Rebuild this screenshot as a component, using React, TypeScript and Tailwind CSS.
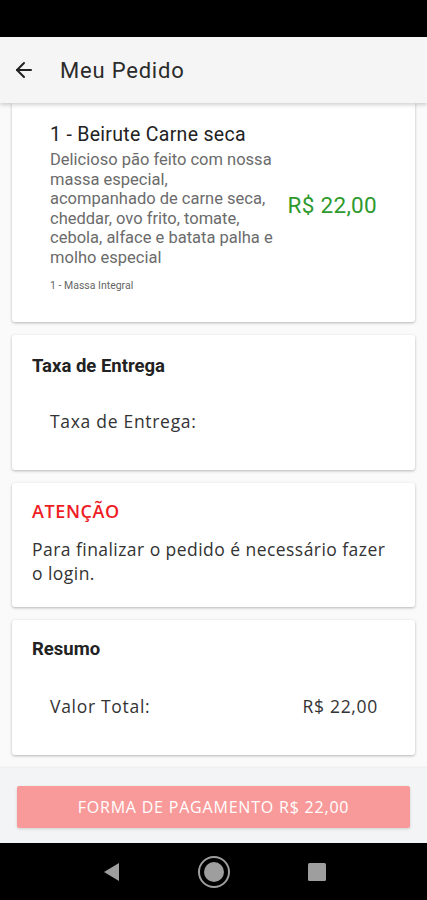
import { ArrowLeft } from 'lucide-react'

const card = 'bg-white rounded-[3px] shadow-[0_1px_3px_rgba(0,0,0,0.28)]'

export default function App() {
  return (
    <div className="w-[427px] h-[900px] flex flex-col bg-[#fafafa] overflow-hidden font-['Roboto',sans-serif]">
      {/* status bar */}
      <div className="h-[37px] bg-black shrink-0" />

      {/* app bar */}
      <header className="relative z-10 h-[66px] shrink-0 flex items-center bg-[#f5f5f5] shadow-[0_2px_4px_rgba(0,0,0,0.18)]">
        <ArrowLeft size={24} strokeWidth={2} className="ml-[12px] text-[#222]" />
        <h1 className="ml-[24px] text-[22px] text-[#2b2b2b] tracking-[0.8px]">Meu Pedido</h1>
      </header>

      {/* content */}
      <main className="flex-1 flex flex-col gap-[13px] px-[12px] overflow-hidden">
        <section className={`${card} rounded-t-none pt-[21px] pb-[29px] pl-[38px] pr-[38px] flex items-center justify-between`}>
          <div className="w-[226px]">
            <div className="text-[19.5px] leading-[22px] text-[#222] tracking-[0.3px]">1 - Beirute Carne seca</div>
            <p className="mt-[4px] text-[16.5px] leading-[19.6px] text-[#6b6b6b]">
              Delicioso pão feito com nossa massa especial, acompanhado de carne seca, cheddar, ovo frito, tomate, cebola, alface e batata palha e molho especial
            </p>
            <div className="mt-[10px] text-[10.5px] text-[#666]">1 - Massa Integral</div>
          </div>
          <div className="text-[22.5px] text-[#2e9a2e] mt-[-6px] tracking-[0.3px]">R$ 22,00</div>
        </section>

        <section className={`${card} h-[135px] pt-[19px] pl-[20px]`}>
          <h2 className="text-[18.5px] font-bold text-[#222] leading-[24px]">Taxa de Entrega</h2>
          <div className="mt-[30px] pl-[18px] text-[17.5px] text-[#333] font-['Open_Sans',sans-serif] tracking-[0.7px]">
            Taxa de Entrega:
          </div>
        </section>

        <section className={`${card} h-[124px] pt-[16px] pl-[20px] pr-[16px]`}>
          <h2 className="text-[18px] text-[#ee1c25] font-['Open_Sans',sans-serif] font-semibold leading-[24px] tracking-[0.6px]">ATENÇÃO</h2>
          <p className="mt-[14px] text-[17.5px] leading-[24px] text-[#333] font-['Open_Sans',sans-serif] tracking-[0.45px]">
            Para finalizar o pedido é necessário fazer o login.
          </p>
        </section>

        <section className={`${card} h-[135px] pt-[17px] pl-[20px] pr-[37px]`}>
          <h2 className="text-[18.5px] font-bold text-[#222] leading-[24px]">Resumo</h2>
          <div className="mt-[32px] pl-[18px] flex justify-between text-[17.5px] text-[#333] font-['Open_Sans',sans-serif] tracking-[0.7px]">
            <span>Valor Total:</span>
            <span>R$ 22,00</span>
          </div>
        </section>
      </main>

      {/* bottom action */}
      <footer className="h-[75px] shrink-0 bg-[#f3f4f5] shadow-[0_-1px_2px_rgba(0,0,0,0.06)] px-[17px] pt-[18px]">
        <button className="w-full h-[42px] rounded-[2px] bg-[#f99a9a] text-white text-[16px] uppercase font-['Open_Sans',sans-serif] tracking-[0.8px] shadow-[0_1px_3px_rgba(0,0,0,0.15)]">
          Forma de pagamento R$ 22,00
        </button>
      </footer>

      {/* navigation bar */}
      <nav className="h-[57px] shrink-0 bg-black flex items-center justify-center gap-[76px]">
        <svg width="20" height="22" viewBox="0 0 20 22">
          <path d="M18 2 L3 11 L18 20 Z" fill="#9e9e9e" />
        </svg>
        <svg width="34" height="34" viewBox="0 0 34 34">
          <circle cx="17" cy="17" r="15" fill="none" stroke="#9e9e9e" strokeWidth="2" />
          <circle cx="17" cy="17" r="10" fill="#9e9e9e" />
        </svg>
        <svg width="20" height="20" viewBox="0 0 20 20">
          <rect x="1" y="1" width="18" height="18" rx="1.5" fill="#9e9e9e" />
        </svg>
      </nav>
    </div>
  )
}
